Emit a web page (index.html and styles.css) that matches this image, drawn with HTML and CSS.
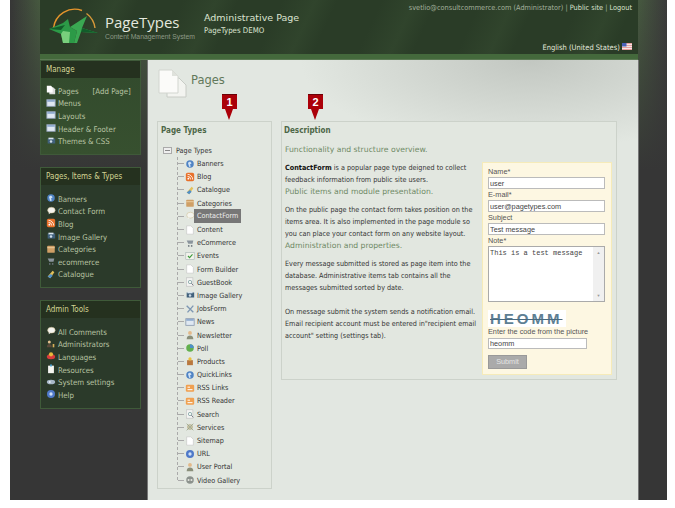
FILE: index.html
```html
<!DOCTYPE html>
<html lang="en">
<head>
    <meta charset="UTF-8">
    <title>PageTypes - Administrative Page</title>
    <link rel="stylesheet" href="styles.css">
</head>
<body>
<svg class="sprites" width="0" height="0">
    <symbol id="i-page" viewBox="0 0 12 12"><path d="M2 1h5l3 3v7H2z" fill="#fff" stroke="#bbb" stroke-width=".6"/></symbol>
    <symbol id="i-pages" viewBox="0 0 12 12"><path d="M4 3h5l2 2v6H4z" fill="#ddd"/><path d="M1 1h5l2 2v6H1z" fill="#fff"/></symbol>
    <symbol id="i-window" viewBox="0 0 12 12"><rect x="1" y="2" width="10" height="8" fill="#dfe8f2" stroke="#8b9bb0"/><rect x="1.5" y="2.500" width="9" height="2" fill="#8aa6cc"/></symbol>
    <symbol id="i-rss" viewBox="0 0 12 12"><rect x="1" y="1" width="10" height="10" rx="2" fill="#e8702a"/><circle cx="4" cy="8" r="1.100" fill="#fff"/><path d="M3 5.200A3.800 3.800 0 0 1 6.800 9M3 2.800A6.200 6.200 0 0 1 9.200 9" fill="none" stroke="#fff"/></symbol>
    <symbol id="i-box" viewBox="0 0 12 12"><rect x="1.500" y="2" width="9" height="8.500" rx="1" fill="#cf9f66"/><rect x="1.500" y="4" width="9" height="1" fill="#f0d4a8"/></symbol>
    <symbol id="i-bubble" viewBox="0 0 12 12"><ellipse cx="6.500" cy="5" rx="4.500" ry="3.500" fill="#f4f4ee" stroke="#c9b98c" stroke-width=".6"/><path d="M4 7.500 3 10l3-2z" fill="#f4f4ee"/></symbol>
    <symbol id="i-globe" viewBox="0 0 12 12"><circle cx="6" cy="6" r="4.500" fill="#4f83c4"/><path d="M3.500 4.500 6 3l2 2-2 1.500 1 2.500-2 .5z" fill="#cfe2f5"/></symbol>
    <symbol id="i-cart" viewBox="0 0 12 12"><path d="M2 3h8l-1 4H4z" fill="#8a949c"/><circle cx="4.500" cy="9.500" r="1" fill="#6a747c"/><circle cx="8" cy="9.500" r="1" fill="#6a747c"/></symbol>
    <symbol id="i-leaf" viewBox="0 0 12 12"><path d="M2 9 8 2l2 2-5 7z" fill="#e3c15a"/><path d="M2 9l4-3 2 2-3 3z" fill="#4f8fc8"/></symbol>
    <symbol id="i-photo" viewBox="0 0 12 12"><rect x="2" y="3" width="9" height="6" fill="#41617c"/><rect x="3" y="2" width="6" height="2" fill="#d8e4ee"/><circle cx="6" cy="6.500" r="1.500" fill="#cfdde8"/></symbol>
    <symbol id="i-mail" viewBox="0 0 12 12"><rect x="1" y="2" width="10" height="8" fill="#f3f3ec" stroke="#9aa" stroke-width=".6"/><path d="m3.500 6 2 2 3.500-4" fill="none" stroke="#3a9a3a" stroke-width="1.300"/></symbol>
    <symbol id="i-tool" viewBox="0 0 12 12"><path d="m2 2 8 8M10 2 3 10" stroke="#7d97b3" stroke-width="1.600" fill="none"/></symbol>
    <symbol id="i-person" viewBox="0 0 12 12"><circle cx="6" cy="3.500" r="2.300" fill="#e2b98a"/><path d="M2 11c0-3.500 2-4.500 4-4.500s4 1 4 4.500z" fill="#8a8f7a"/></symbol>
    <symbol id="i-green" viewBox="0 0 12 12"><circle cx="6" cy="6" r="4.500" fill="#62b04e"/><path d="M6 1.500a4.500 4.500 0 0 1 4.500 4.500H6z" fill="#4f8fc8"/></symbol>
    <symbol id="i-pot" viewBox="0 0 12 12"><rect x="2.500" y="5" width="7" height="6" fill="#b9783e"/><circle cx="6" cy="3.500" r="2" fill="#e9c23d"/></symbol>
    <symbol id="i-orange" viewBox="0 0 12 12"><rect x="1" y="2" width="10" height="8.500" rx="1.500" fill="#f0a050"/><path d="M3 5h3M3 8h6" stroke="#fff" stroke-width="1.200"/></symbol>
    <symbol id="i-search" viewBox="0 0 12 12"><rect x="1.500" y="1" width="8" height="10" fill="#f4f4f2" stroke="#b5b5b5" stroke-width=".6"/><circle cx="6" cy="6" r="2" fill="none" stroke="#8aa"/><path d="m7.500 7.500 2.500 2.500" stroke="#667"/></symbol>
    <symbol id="i-gear" viewBox="0 0 12 12"><circle cx="6" cy="6" r="2.500" fill="none" stroke="#b9b18a" stroke-width="1.600"/><path d="m2 2 8 8M10 2l-8 8" stroke="#9aa58a"/></symbol>
    <symbol id="i-film" viewBox="0 0 12 12"><circle cx="6" cy="6" r="4.500" fill="#8b918c"/><circle cx="4.300" cy="6" r="1.200" fill="#e6e6e0"/><circle cx="7.700" cy="6" r="1.200" fill="#e6e6e0"/></symbol>
    <symbol id="i-help" viewBox="0 0 12 12"><circle cx="6" cy="6" r="4.800" fill="#4f79c9"/><circle cx="6" cy="6" r="2" fill="#cfe0f7"/></symbol>
    <symbol id="i-admin" viewBox="0 0 12 12"><circle cx="4" cy="3.500" r="1.800" fill="#e3c08f"/><path d="M1 10c0-3 1.500-4 3-4s3 1 3 4z" fill="#5a4a3a"/><path d="M8 10V6h2v4z" fill="#d9b05a"/></symbol>
    <symbol id="i-lang" viewBox="0 0 12 12"><ellipse cx="6" cy="7" rx="5" ry="3" fill="#d83c3c"/><circle cx="6" cy="4" r="2.500" fill="#e7b93c"/></symbol>
    <symbol id="i-clip" viewBox="0 0 12 12"><rect x="2.500" y="2" width="7" height="9" fill="#f5f5f0"/><rect x="5" y=".5" width="2" height="2.500" fill="#4aa3d8"/></symbol>
    <symbol id="i-settings" viewBox="0 0 12 12"><ellipse cx="6" cy="6" rx="5" ry="2.800" fill="#a8b8c8"/><circle cx="4.500" cy="6" r="1.300" fill="#e6eef5"/></symbol>
</svg>

<div class="frame">
    <header class="top">
        <div class="brand">
            <svg class="logo" width="50" height="37" viewBox="0 0 50 37">
                <path d="M5.500 21A21.500 21.500 0 0 1 34 3.500" fill="none" stroke="#e6952c" stroke-width="1.400"/>
                <path d="M38.500 6.500A21.500 21.500 0 0 1 47 21" fill="none" stroke="#d99a3a" stroke-width="1.400"/>
                <path d="M1 22 15 16l5-4 2 8 7 4-3 12H15l-2-9z" fill="#2c9a47"/>
                <path d="m22 20 17-11-5 12 16 5-17-1-4 11h-3l3-12z" fill="#3aa852"/>
                <path d="M15 24 13 27l2 9h6l1-11z" fill="#79cf7d"/>
                <path d="M1 22 13 23l4-5z" fill="#125c2a"/>
                <path d="m34 21 16 5-17-1z" fill="#125c2a"/>
            </svg>
            <div>
                <div class="brand-name">PageTypes</div>
                <div class="brand-sub">Content Management System</div>
            </div>
        </div>
        <div class="site-title">
            <div class="site-main">Administrative Page</div>
            <div class="site-demo">PageTypes DEMO</div>
        </div>
        <div class="top-right">
            <div class="user-links">svetlio@consultcommerce.com (Administrator) | <b>Public site</b> | <b>Logout</b></div>
            <div class="lang">English (United States)
                <svg width="10" height="7" viewBox="0 0 10 7"><rect width="10" height="7" fill="#e8a0a0"/><path d="M0 1.500h10M0 3.500h10M0 5.500h10" stroke="#f2e6e6"/><rect width="4.500" height="3.500" fill="#4a62b8"/></svg>
            </div>
        </div>
    </header>
    <div class="strip"></div>

    <div class="columns">
        <aside class="side">
            <section class="panel panel-manage">
                <h4>Manage</h4>
                <ul>
                    <li><svg><use href="#i-pages"/></svg>Pages<span class="add">[Add Page]</span></li>
                    <li><svg><use href="#i-window"/></svg>Menus</li>
                    <li><svg><use href="#i-window"/></svg>Layouts</li>
                    <li><svg><use href="#i-window"/></svg>Header &amp; Footer</li>
                    <li><svg><use href="#i-photo"/></svg>Themes &amp; CSS</li>
                </ul>
            </section>
            <section class="panel">
                <h4>Pages, Items &amp; Types</h4>
                <ul>
                    <li><svg><use href="#i-globe"/></svg>Banners</li>
                    <li><svg><use href="#i-bubble"/></svg>Contact Form</li>
                    <li><svg><use href="#i-rss"/></svg>Blog</li>
                    <li><svg><use href="#i-photo"/></svg>Image Gallery</li>
                    <li><svg><use href="#i-box"/></svg>Categories</li>
                    <li><svg><use href="#i-cart"/></svg>ecommerce</li>
                    <li><svg><use href="#i-leaf"/></svg>Catalogue</li>
                </ul>
            </section>
            <section class="panel">
                <h4>Admin Tools</h4>
                <ul>
                    <li><svg><use href="#i-bubble"/></svg>All Comments</li>
                    <li><svg><use href="#i-admin"/></svg>Administrators</li>
                    <li><svg><use href="#i-lang"/></svg>Languages</li>
                    <li><svg><use href="#i-clip"/></svg>Resources</li>
                    <li><svg><use href="#i-settings"/></svg>System settings</li>
                    <li><svg><use href="#i-help"/></svg>Help</li>
                </ul>
            </section>
        </aside>

        <main class="content">
            <div class="page-head">
                <svg class="page-icon" width="29" height="29" viewBox="0 0 29 29">
                    <path d="M9 9h12l7 7v12H9z" fill="#f3f4f0" stroke="#c8ccc6"/>
                    <path d="M1 1h13l6 6v17H1z" fill="#fbfbf9" stroke="#d2d5cf"/>
                    <path d="M14 1v6h6z" fill="#dfe2dc"/>
                </svg>
                <h2>Pages</h2>
            </div>
            <div class="marker marker-1">1</div>
            <div class="marker marker-2">2</div>
            <div class="boxes">
                <section class="box tree-box">
                    <h5>Page Types</h5>
                    <div class="tree-root"><span class="minus"></span>Page Types</div>
                    <ul class="tree">
                        <li><svg><use href="#i-globe"/></svg>Banners</li>
                        <li><svg><use href="#i-rss"/></svg>Blog</li>
                        <li><svg><use href="#i-leaf"/></svg>Catalogue</li>
                        <li><svg><use href="#i-box"/></svg>Categories</li>
                        <li><svg><use href="#i-bubble"/></svg><span class="selected">ContactForm</span></li>
                        <li><svg><use href="#i-page"/></svg>Content</li>
                        <li><svg><use href="#i-cart"/></svg>eCommerce</li>
                        <li><svg><use href="#i-mail"/></svg>Events</li>
                        <li><svg><use href="#i-page"/></svg>Form Builder</li>
                        <li><svg><use href="#i-search"/></svg>GuestBook</li>
                        <li><svg><use href="#i-photo"/></svg>Image Gallery</li>
                        <li><svg><use href="#i-tool"/></svg>JobsForm</li>
                        <li><svg><use href="#i-window"/></svg>News</li>
                        <li><svg><use href="#i-person"/></svg>Newsletter</li>
                        <li><svg><use href="#i-green"/></svg>Poll</li>
                        <li><svg><use href="#i-pot"/></svg>Products</li>
                        <li><svg><use href="#i-globe"/></svg>QuickLinks</li>
                        <li><svg><use href="#i-orange"/></svg>RSS Links</li>
                        <li><svg><use href="#i-orange"/></svg>RSS Reader</li>
                        <li><svg><use href="#i-search"/></svg>Search</li>
                        <li><svg><use href="#i-gear"/></svg>Services</li>
                        <li><svg><use href="#i-page"/></svg>Sitemap</li>
                        <li><svg><use href="#i-help"/></svg>URL</li>
                        <li><svg><use href="#i-person"/></svg>User Portal</li>
                        <li><svg><use href="#i-film"/></svg>Video Gallery</li>
                    </ul>
                </section>

                <section class="box desc-box">
                    <h5>Description</h5>
                    <div class="desc-text">
                        <p class="lead">Functionality and structure overview.</p>
                        <p><b>ContactForm</b> is a popular page type deigned to collect<br>feedback information from public site users.<br><span class="green">Public items and module presentation.</span></p>
                        <p>On the public page the contact form takes position on the<br>items area. It is also implemented in the page module so<br>you can place your contact form on any website layout.<br><span class="green">Administration and properties.</span></p>
                        <p>Every message submitted is stored as page item into the<br>database. Administrative items tab contains all the<br>messages submitted sorted by date.</p>
                        <p class="gap">On message submit the system sends a notification email.<br>Email recipient account must be entered in"recipient email<br>account" setting (settings tab).</p>
                    </div>
                    <form class="contact">
                        <label>Name*</label>
                        <input type="text" value="user">
                        <label>E-mail*</label>
                        <input type="text" value="user@pagetypes.com">
                        <label>Subject</label>
                        <input type="text" value="Test message">
                        <label>Note*</label>
                        <div class="note">
                            <div class="note-text">This is a test message</div>
                            <div class="note-bar"><span>▲</span><span>▼</span></div>
                        </div>
                        <div class="captcha">HEOMM</div>
                        <label>Enter the code from the picture</label>
                        <input class="code" type="text" value="heomm">
                        <div class="submit">Submit</div>
                    </form>
                </section>
            </div>
        </main>
    </div>
</div>
</body>
</html>
```

FILE: styles.css
```css
* {
    box-sizing: border-box;
}
html, body {
    margin: 0;
    padding: 0;
    background: #fff;
    height: 508px;
    overflow: hidden;
}
body {
    font-family: "DejaVu Sans Condensed", "DejaVu Sans", Tahoma, sans-serif;
    font-stretch: condensed;
    font-size: 8px;
    color: #222;
}
ul {
    list-style: none;
    margin: 0;
    padding: 0;
}
.sprites {
    display: none;
}
.frame {
    margin: 0 8px 0 10px;
    height: 500px;
    padding: 0 29px 0 30px;
    background:
        linear-gradient(180deg, rgba(54, 54, 54, 0) 0, #363636 170px),
        linear-gradient(90deg, #363636 0, #46593f 30px, #46593f 628px, #3a3a3a 100%);
}
.top {
    height: 54px;
    display: flex;
    background: repeating-linear-gradient(115deg, #2a3c27 0, #2a3c27 40px, #30442c 70px, #2a3c27 90px);
    color: #dfe6d6;
}
.brand {
    display: flex;
    width: 164px;
    padding: 7px 0 0 8px;
}
.brand-name {
    font-family: "Open Sans", "Noto Sans", sans-serif;
    font-stretch: normal;
    font-size: 15px;
    color: #e4e8de;
    margin: 5px 0 0 7px;
    line-height: 20px;
}
.brand-sub {
    font-family: "Liberation Sans", Arial, sans-serif;
    font-stretch: normal;
    font-size: 6.8px;
    line-height: 8px;
    color: #8d9a86;
    margin: 1px 0 0 7px;
    white-space: nowrap;
}
.site-title {
    padding-top: 11px;
}
.site-main {
    font-family: "DejaVu Sans", sans-serif;
    font-stretch: normal;
    font-size: 9.5px;
    line-height: 13px;
    color: #dbe3d0;
}
.site-demo {
    font-size: 7.8px;
    line-height: 14px;
    color: #dbe3d0;
}
.top-right {
    margin-left: auto;
    text-align: right;
    padding: 3px 6px 0 0;
    font-size: 7.3px;
    color: #a3b09c;
}
.user-links b {
    font-weight: normal;
    color: #dbe3d0;
}
.lang {
    margin-top: 31px;
    color: #e3e8dc;
    font-size: 7.5px;
    line-height: 10px;
}
.strip {
    height: 6px;
    background: #44693c;
    border-bottom: 1px solid #5c7a54;
}
.columns {
    display: flex;
    gap: 7px;
    height: 440px;
}
.side {
    width: 101px;
}
.panel {
    background: #2b3a2a;
    border: 1px solid #3f5a39;
    margin-bottom: 12px;
    height: 121px;
    color: #b9c4a3;
}
.panel-manage {
    background: linear-gradient(180deg, #324a2d, #37502f);
    height: 95px;
    margin-bottom: 12px;
}
.panel:nth-child(3) {
    height: 109px;
}
.panel h4 {
    margin: 0;
    height: 17px;
    padding-left: 5px;
    background: #25311f;
    font-size: 8px;
    font-weight: normal;
    line-height: 17px;
    color: #d4d594;
}
.panel ul {
    padding: 8px 0 0 5px;
}
.panel-manage ul {
    padding-top: 7px;
}
.panel li {
    display: flex;
    align-items: center;
    height: 12.6px;
    font-size: 7.8px;
    white-space: nowrap;
}
.panel li svg {
    width: 10px;
    height: 10px;
    margin: -2px 2px 0 0;
}
.add {
    margin-left: 14px;
}
.content {
    flex: 1;
    background:
        radial-gradient(ellipse 230px 90px at 78% 0, #c2c7c1 0, rgba(226, 231, 225, 0) 100%),
        #e2e7e1;
    box-shadow: -1px 0 0 #777, 1px 0 0 #777;
    padding: 9px 11px 0 9px;
    position: relative;
}
.page-head {
    display: flex;
    height: 33px;
    padding-left: 1px;
}
.page-icon {
    display: block;
}
.page-head h2 {
    margin: 4px 0 0 4px;
    font-family: "DejaVu Sans", sans-serif;
    font-stretch: normal;
    font-size: 11.5px;
    font-weight: normal;
    color: #62795b;
}
.marker {
    position: absolute;
    top: 34px;
    width: 15px;
    height: 15px;
    background: #ab0009;
    border-top: 1px solid #6b0006;
    color: #fff;
    font: bold 11px/14px "Liberation Sans", Arial, sans-serif;
    text-align: center;
}
.marker::after {
    content: "";
    position: absolute;
    left: 3px;
    top: 14px;
    border: 4px solid transparent;
    border-top: 11px solid #ab0009;
    border-bottom: 0;
}
.marker-1 {
    left: 74px;
}
.marker-2 {
    left: 160px;
}
.boxes {
    display: flex;
    gap: 9px;
    margin-top: 19px;
}
.box {
    border: 1px solid #ccd2ca;
    background: #e2e7e0;
}
.box h5 {
    margin: 0;
    font-size: 8px;
    line-height: 11px;
    color: #4d6647;
}
.tree-box {
    width: 115px;
    height: 368px;
    padding: 3px 3px;
}
.tree-root {
    display: flex;
    align-items: center;
    font-size: 7.2px;
    margin: 8px 0 0 2px;
    height: 12px;
    color: #333;
}
.minus {
    width: 9px;
    height: 7px;
    margin-right: 4px;
    background: #eee linear-gradient(#888, #888) center / 5px 1px no-repeat;
    border: 1px solid #aaa;
}
.tree {
    margin: 1px 0 0 16px;
    border-left: 1px dashed #aaa;
    height: 323px;
}
.tree li {
    display: flex;
    align-items: center;
    height: 13.2px;
    font-size: 7.2px;
    color: #333;
    white-space: nowrap;
}
.tree li::before {
    content: "";
    width: 6px;
    border-top: 1px solid #aaa;
    margin-right: 1px;
}
.tree li svg {
    width: 10px;
    height: 10px;
    margin-right: 2px;
    flex: none;
}
.selected {
    background: #777;
    color: #eee;
    height: 14px;
    line-height: 14px;
    padding: 0 3px;
    margin-left: -3px;
}
.desc-box {
    position: relative;
    width: 336px;
    height: 259px;
    padding: 3px 4px 0 2px;
}
.desc-text {
    padding-left: 1px;
    font-size: 7.2px;
    line-height: 12px;
    color: #333;
    white-space: nowrap;
}
.desc-text p {
    margin: 0 0 6px;
}
.desc-text .lead {
    margin: 8px 0 6px;
}
.desc-text .gap {
    margin-top: 12px;
}
.desc-text b {
    color: #111;
}
.green, .lead {
    font-family: "DejaVu Sans", sans-serif;
    font-stretch: normal;
    color: #6f8a66;
    font-size: 7.7px;
}
.contact {
    position: absolute;
    right: 4px;
    top: 40px;
    width: 130px;
    height: 213px;
    padding: 4px 5px;
    background: #fdf7e2;
    border: 1px solid #f6ebb9;
    font-family: "Liberation Sans", Arial, sans-serif;
    font-stretch: normal;
    font-size: 7.3px;
    color: #555;
    display: flex;
    flex-direction: column;
}
.contact label {
    line-height: 10px;
    height: 10px;
    white-space: nowrap;
}
.contact input {
    height: 12px;
    width: 117px;
    margin: 0 0 1px;
    padding: 0 1px;
    border: 1px solid #bbb;
    background: #fff;
    font: 7.3px "Liberation Sans", Arial, sans-serif;
    color: #444;
}
.note {
    display: flex;
    width: 117px;
    height: 56px;
    border: 1px solid #aaa;
    background: #fff;
    margin-bottom: 8px;
}
.note-text {
    flex: 1;
    padding: 2px 1px;
    font: 7px "Liberation Mono", monospace;
    color: #444;
}
.note-bar {
    width: 11px;
    background: #f0f0f0;
    display: flex;
    flex-direction: column;
    justify-content: space-between;
    align-items: center;
    font-size: 4px;
    color: #999;
    padding: 3px 0;
}
.captcha {
    width: 78px;
    height: 17px;
    background: #fff;
    color: #5e7f94;
    font: bold 15px/17px "Liberation Sans", Arial, sans-serif;
    letter-spacing: 3px;
    padding-left: 2px;
    white-space: nowrap;
    overflow: hidden;
    text-decoration: line-through;
    text-decoration-color: #4a6a7f;
}
.contact .code {
    width: 99px;
    margin-top: 1px;
    height: 11px;
}
.submit {
    width: 39px;
    height: 14px;
    margin-top: 5px;
    background: #aaa;
    border: 1px solid #999;
    color: #e4e4e4;
    line-height: 12px;
    text-align: center;
}
```
